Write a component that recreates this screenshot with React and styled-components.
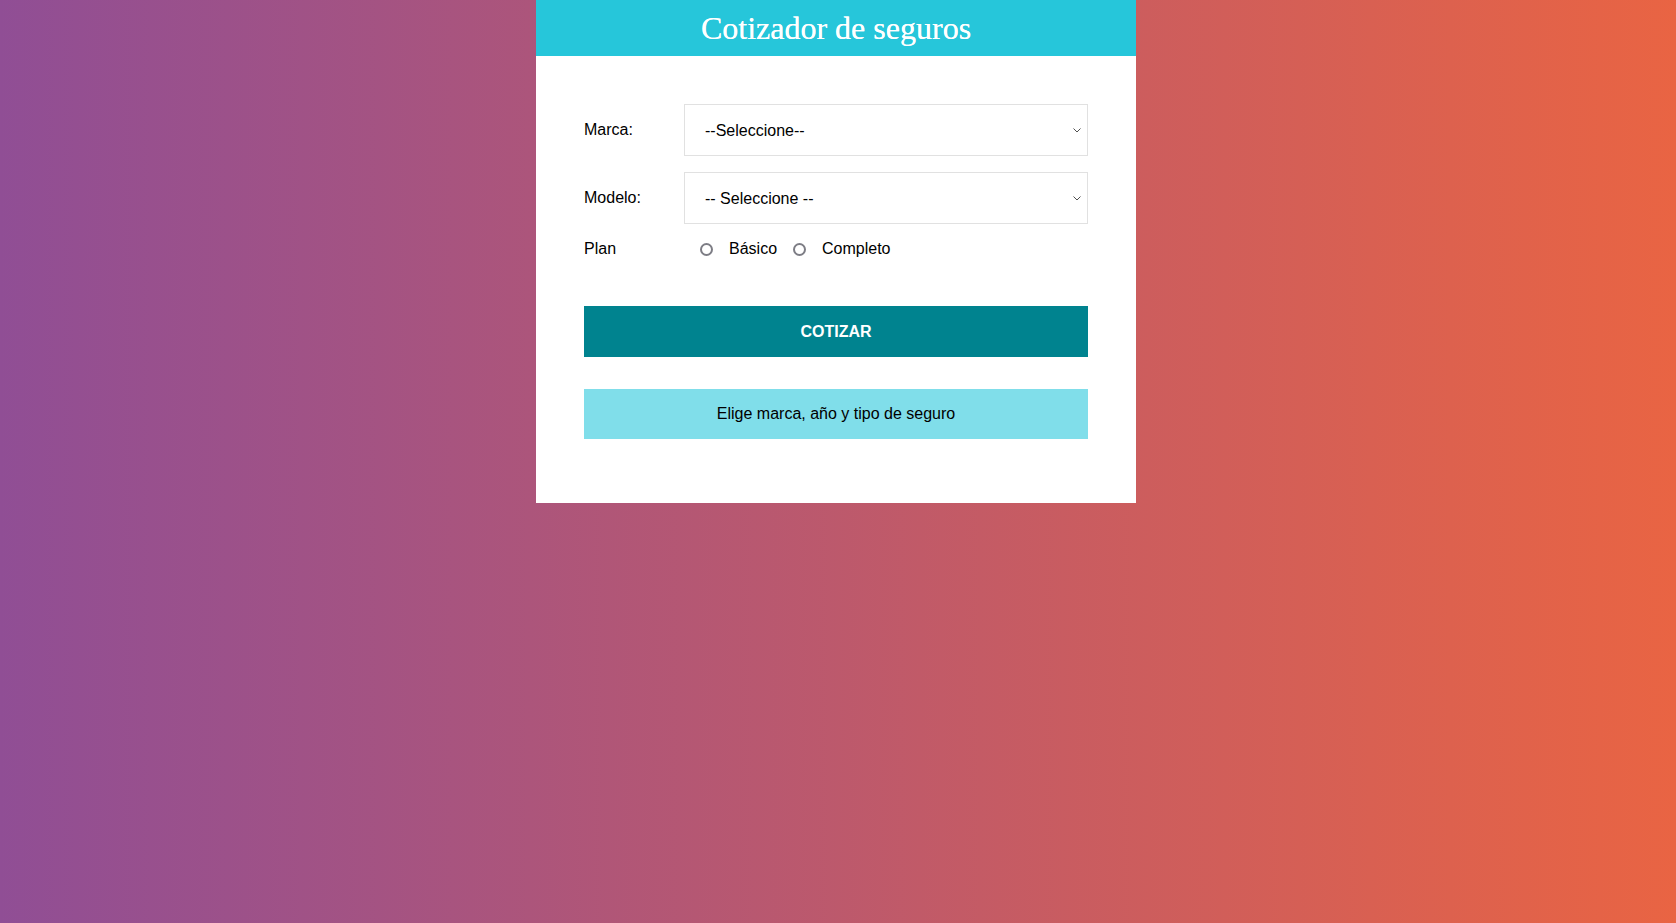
import styled, { createGlobalStyle } from "styled-components";

const GlobalStyle = createGlobalStyle`
  body {
    margin: 0;
    min-height: 100vh;
    font-family: "Liberation Sans", Arial, sans-serif;
    background: #e96443;
    background: linear-gradient(to right, #904e95, #e96443);
  }
  * {
    box-sizing: border-box;
  }
`;

const Container = styled.div`
  max-width: 600px;
  margin: 0 auto;
  position: relative;
  left: -2px;
`;

const Header = styled.header`
  background-color: #26c6da;
  padding: 10px;
  color: #fff;
  text-align: center;
`;

const Title = styled.h1`
  margin: 0;
  font-size: 2rem;
  line-height: 36px;
  font-weight: normal;
  font-family: "Liberation Serif", "DejaVu Serif", serif;
  text-shadow: 0 0 0.6px #fff;
`;

const FormBox = styled.div`
  background-color: #fff;
  padding: 3rem;
`;

const Campo = styled.div`
  display: flex;
  align-items: center;
  margin-bottom: 1rem;
`;

const Label = styled.label`
  flex: 0 0 100px;
  font-size: 16px;
  color: #000;
`;

// flechita del select
const chevron =
  "data:image/svg+xml;utf8,<svg xmlns='http://www.w3.org/2000/svg' width='8' height='5' viewBox='0 0 8 5'><path d='M0.5 0.5 L4 4 L7.5 0.5' fill='none' stroke='%23505050' stroke-width='1'/></svg>";

const Select = styled.select`
  display: block;
  width: 100%;
  height: 52px;
  padding: 0 1rem 0 20px;
  border: 1px solid #e1e1e1;
  background: #fff url("${chevron}") no-repeat right 6px center;
  appearance: none;
  -webkit-appearance: none;
  font-family: "Liberation Sans", Arial, sans-serif;
  font-size: 16px;
  color: #000;
  border-radius: 0;
`;

const Radio = styled.input`
  appearance: none;
  -webkit-appearance: none;
  width: 13px;
  height: 13px;
  border: 2px solid #7d7d85;
  border-radius: 50%;
  margin: 0 1rem;
  background: #fff;
`;

const RadioText = styled.span`
  font-size: 16px;
  color: #000;
`;

const Boton = styled.button`
  display: block;
  background-color: #00838f;
  font-family: "Liberation Sans", Arial, sans-serif;
  font-size: 16px;
  width: 100%;
  padding: 16.5px 1rem;
  color: #fff;
  text-transform: uppercase;
  font-weight: bold;
  border: none;
  margin-top: 3rem;
`;

const Mensaje = styled.p`
  background-color: #80deea;
  margin: 2rem 0 1rem;
  padding: 1rem;
  text-align: center;
  font-size: 16px;
  color: #000;
`;

function App() {
  return (
    <>
      <GlobalStyle />
      <Container>
        <Header>
          <Title>Cotizador de seguros</Title>
        </Header>
        <FormBox>
          <form>
            <Campo>
              <Label>Marca:</Label>
              <Select name="marca" defaultValue="">
                <option value="">--Seleccione--</option>
                <option value="americano">Americano</option>
                <option value="europeo">Europeo</option>
                <option value="asiatico">Asiatico</option>
              </Select>
            </Campo>
            <Campo>
              <Label>Modelo:</Label>
              <Select name="year" defaultValue="">
                <option value="">-- Seleccione --</option>
                <option value="2021">2021</option>
                <option value="2020">2020</option>
              </Select>
            </Campo>
            <Campo>
              <Label>Plan</Label>
              <Radio type="radio" name="plan" value="basico" />
              <RadioText>Básico</RadioText>
              <Radio type="radio" name="plan" value="completo" />
              <RadioText>Completo</RadioText>
            </Campo>
            <Boton type="button">Cotizar</Boton>
          </form>
          <Mensaje>Elige marca, año y tipo de seguro</Mensaje>
        </FormBox>
      </Container>
    </>
  );
}

export default App;
